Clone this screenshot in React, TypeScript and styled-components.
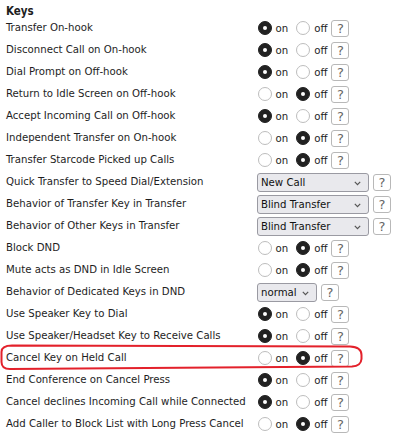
import React from "react";
import styled, { createGlobalStyle } from "styled-components";

const Global = createGlobalStyle`
  html, body { margin: 0; padding: 0; background: #fff; }
  body { font-family: "DejaVu Sans Condensed", "DejaVu Sans", sans-serif; font-size: 11.3px; color: #1e1e1e; }
`;

const Page = styled.div`
  position: relative;
  width: 400px;
  height: 433px;
  overflow: hidden;
  padding-left: 6px;
  box-sizing: border-box;
`;

const Heading = styled.div`
  height: 17px;
  display: flex;
  align-items: center;
  padding-top: 4px;
  box-sizing: border-box;
  font-weight: bold;
  font-size: 11.5px;
`;

const Table = styled.div`
  display: grid;
  grid-template-columns: 251px 1fr;
  grid-auto-rows: 22px;
`;

const Label = styled.div`
  display: flex;
  align-items: center;
  white-space: nowrap;
  padding-bottom: 1px;
`;

const Controls = styled.div`
  display: flex;
  align-items: center;
`;

const Radio = styled.input<{ $first?: boolean }>`
  appearance: none;
  -webkit-appearance: none;
  width: 14px;
  height: 14px;
  margin: 0 0 0 ${(p) => (p.$first ? "0.5px" : "8px")};
  border-radius: 50%;
  border: 1px solid #bdbdbd;
  background: #fff;
  box-sizing: border-box;
  display: grid;
  place-items: center;
  &:checked {
    background: #222;
    border-color: #222;
  }
  &:checked::after {
    content: "";
    width: 4px;
    height: 4px;
    border-radius: 50%;
    background: #fff;
  }
`;

const RadioText = styled.label`
  margin-left: 4px;
  color: #1e1e1e;
`;

const Help = styled.button<{ $gap: number }>`
  width: 18px;
  height: 17px;
  margin-left: ${(p) => p.$gap}px;
  padding: 0;
  border: 1px solid #b8b8b8;
  border-radius: 3px;
  background: #fff;
  color: #666;
  font-family: "DejaVu Sans", sans-serif;
  font-size: 13px;
  line-height: 15px;
  box-sizing: border-box;
`;

const SelectWrap = styled.div`
  position: relative;
  display: flex;
`;

const Select = styled.select<{ $w: number }>`
  appearance: none;
  -webkit-appearance: none;
  width: ${(p) => p.$w}px;
  height: 19px;
  margin: 0;
  padding: 0 14px 0 3px;
  border: 1px solid #9a9aa2;
  border-radius: 3px;
  background: #e9e9ed;
  color: #111;
  font-family: "DejaVu Sans Condensed", "DejaVu Sans", sans-serif;
  font-size: 11.3px;
  box-sizing: border-box;
`;

const Chevron = styled.svg`
  position: absolute;
  right: 8px;
  top: 8px;
  pointer-events: none;
`;

const Annotation = styled.svg`
  position: absolute;
  left: 0;
  top: 0;
  pointer-events: none;
`;

type Row =
  | { label: string; kind: "radio"; value: "on" | "off" }
  | { label: string; kind: "select"; value: string; width: number };

const rows: Row[] = [
  { label: "Transfer On-hook", kind: "radio", value: "on" },
  { label: "Disconnect Call on On-hook", kind: "radio", value: "on" },
  { label: "Dial Prompt on Off-hook", kind: "radio", value: "on" },
  { label: "Return to Idle Screen on Off-hook", kind: "radio", value: "off" },
  { label: "Accept Incoming Call on Off-hook", kind: "radio", value: "on" },
  { label: "Independent Transfer on On-hook", kind: "radio", value: "off" },
  { label: "Transfer Starcode Picked up Calls", kind: "radio", value: "off" },
  { label: "Quick Transfer to Speed Dial/Extension", kind: "select", value: "New Call", width: 112 },
  { label: "Behavior of Transfer Key in Transfer", kind: "select", value: "Blind Transfer", width: 112 },
  { label: "Behavior of Other Keys in Transfer", kind: "select", value: "Blind Transfer", width: 112 },
  { label: "Block DND", kind: "radio", value: "off" },
  { label: "Mute acts as DND in Idle Screen", kind: "radio", value: "off" },
  { label: "Behavior of Dedicated Keys in DND", kind: "select", value: "normal", width: 60 },
  { label: "Use Speaker Key to Dial", kind: "radio", value: "on" },
  { label: "Use Speaker/Headset Key to Receive Calls", kind: "radio", value: "on" },
  { label: "Cancel Key on Held Call", kind: "radio", value: "off" },
  { label: "End Conference on Cancel Press", kind: "radio", value: "on" },
  { label: "Cancel declines Incoming Call while Connected", kind: "radio", value: "on" },
  { label: "Add Caller to Block List with Long Press Cancel", kind: "radio", value: "off" },
];

const selectOptions: Record<string, string[]> = {
  "New Call": ["New Call", "Blind Transfer", "Attended Transfer"],
  "Blind Transfer": ["Blind Transfer", "Attended Transfer", "New Call"],
  normal: ["normal", "custom"],
};

export default function App() {
  return (
    <>
      <Global />
      <Page>
        <Heading>Keys</Heading>
        <Table>
          {rows.map((r, i) => (
            <React.Fragment key={i}>
              <Label>{r.label}</Label>
              <Controls>
                {r.kind === "radio" ? (
                  <>
                    <Radio type="radio" name={`r${i}`} id={`r${i}on`} defaultChecked={r.value === "on"} $first />
                    <RadioText htmlFor={`r${i}on`}>on</RadioText>
                    <Radio type="radio" name={`r${i}`} id={`r${i}off`} defaultChecked={r.value === "off"} />
                    <RadioText htmlFor={`r${i}off`}>off</RadioText>
                    <Help $gap={4}>?</Help>
                  </>
                ) : (
                  <>
                    <SelectWrap>
                      <Select $w={r.width} defaultValue={r.value}>
                        {selectOptions[r.value].map((o) => (
                          <option key={o}>{o}</option>
                        ))}
                      </Select>
                      <Chevron width="7" height="5" viewBox="0 0 7 5">
                        <path d="M0.8 0.8 L3.5 3.6 L6.2 0.8" fill="none" stroke="#555" strokeWidth="1.2" />
                      </Chevron>
                    </SelectWrap>
                    <Help $gap={4}>?</Help>
                  </>
                )}
              </Controls>
            </React.Fragment>
          ))}
        </Table>
        <Annotation width="400" height="433" viewBox="0 0 400 433">
          <path
            d="M12 345.5 L350 346.5 Q361.5 347 361.5 355 L361.5 359 Q361 366 352 366.5 L10 369 Q1.5 369 1.5 362 L1.5 352 Q1.5 345.5 12 345.5 Z"
            fill="none"
            stroke="#e3212b"
            strokeWidth="2"
          />
        </Annotation>
      </Page>
    </>
  );
}
